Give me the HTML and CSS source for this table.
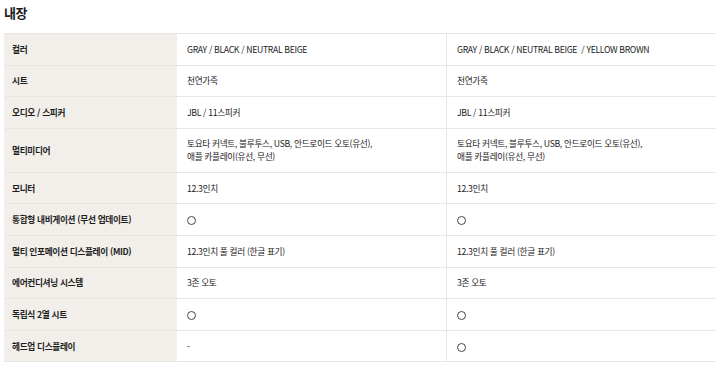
FILE: index.html
```html
<!DOCTYPE html>
<html lang="ko">
<head>
<meta charset="utf-8">
<link rel="stylesheet" href="styles.css">
</head>
<body>
<div class="wrap">
  <h2 class="title">내장</h2>
  <table class="spec">
    <colgroup><col class="c-label"><col class="c-val"><col class="c-val"></colgroup>
    <tbody>
      <tr><th>컬러</th><td>GRAY / BLACK / NEUTRAL BEIGE</td><td>GRAY / BLACK / NEUTRAL BEIGE &nbsp;/ YELLOW BROWN</td></tr>
      <tr><th>시트</th><td>천연가죽</td><td>천연가죽</td></tr>
      <tr><th>오디오 / 스피커</th><td>JBL / 11스피커</td><td>JBL / 11스피커</td></tr>
      <tr class="tall"><th>멀티미디어</th><td>토요타 커넥트, 블루투스, USB, 안드로이드 오토(유선),<br>애플 카플레이(유선, 무선)</td><td>토요타 커넥트, 블루투스, USB, 안드로이드 오토(유선),<br>애플 카플레이(유선, 무선)</td></tr>
      <tr><th>모니터</th><td>12.3인치</td><td>12.3인치</td></tr>
      <tr><th>통합형 내비게이션 (무선 업데이트)</th><td><span class="circ"></span></td><td><span class="circ"></span></td></tr>
      <tr><th>멀티 인포메이션 디스플레이 (MID)</th><td>12.3인치 풀 컬러 (한글 표기)</td><td>12.3인치 풀 컬러 (한글 표기)</td></tr>
      <tr><th>에어컨디셔닝 시스템</th><td>3존 오토</td><td>3존 오토</td></tr>
      <tr><th>독립식 2열 시트</th><td><span class="circ"></span></td><td><span class="circ"></span></td></tr>
      <tr><th>헤드업 디스플레이</th><td>-</td><td><span class="circ"></span></td></tr>
    </tbody>
  </table>
</div>
</body>
</html>
```
FILE: styles.css
```css
html, body {
  margin: 0;
  padding: 0;
  background: #ffffff;
}
body {
  font-family: "Noto Sans CJK KR", "Noto Sans", sans-serif;
  color: #222222;
}
.wrap {
  padding: 4px 4px 0 4px;
}
.title {
  margin: 0;
  font-size: 13px;
  font-weight: 700;
  line-height: 18px;
  letter-spacing: -0.04em;
  color: #1a1a1a;
  height: 29px;
}
.spec {
  width: 712px;
  border-collapse: collapse;
  table-layout: fixed;
  font-size: 8.7px;
  letter-spacing: -0.04em;
}
.c-label { width: 173px; }
.spec tr {
  height: 31.6px;
  border-top: 1px solid #e9e6e1;
  border-bottom: 1px solid #e9e6e1;
}
.spec tr.tall { height: 44px; }
.spec th {
  background: #f2efea;
  text-align: left;
  font-weight: 700;
  padding: 0 8px;
  color: #1e1e1e;
}
.spec td {
  padding: 0 10px;
  color: #222;
  line-height: 13px;
}
.spec td + td {
  border-left: 1px solid #e9e6e1;
}
.circ {
  display: inline-block;
  width: 7px;
  height: 7px;
  border: 1px solid #444;
  border-radius: 50%;
  vertical-align: middle;
}
```
